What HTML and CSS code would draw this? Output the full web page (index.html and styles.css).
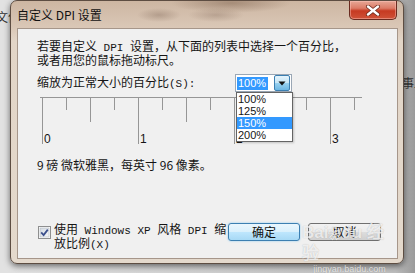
FILE: index.html
```html
<!DOCTYPE html>
<html lang="zh-CN">
<head>
    <meta charset="UTF-8">
    <title>自定义 DPI 设置</title>
    <link rel="stylesheet" href="styles.css">
</head>
<body>
    <span class="behind behind-left">文件</span>
    <span class="behind behind-right">事上</span>

    <div class="window">
        <div class="titlebar">
            <span class="title">自定义 DPI 设置</span>
            <button class="close" aria-label="关闭">
                <svg width="16" height="11" viewBox="0 0 16 11">
                    <path d="M3 1.5 L13 9.5 M13 1.5 L3 9.5" stroke="#6b2a1c" stroke-width="4" stroke-linecap="round"/>
                    <path d="M3 1.5 L13 9.5 M13 1.5 L3 9.5" stroke="#fff" stroke-width="2.4" stroke-linecap="round"/>
                </svg>
            </button>
        </div>

        <div class="panel">
            <p class="intro">若要自定义<span class="en"> DPI </span>设置，从下面的列表中选择一个百分比，<br>或者用您的鼠标拖动标尺。</p>

            <div class="scale-row">
                <span class="scale-label">缩放为正常大小的百分比<span class="en">(S):</span></span>
                <div class="combo">
                    <span class="combo-value">100%</span>
                    <span class="combo-btn">
                        <svg width="14" height="14" viewBox="0 0 14 14"><polygon points="3.5,5.5 10.5,5.5 7,9.5" fill="#111"/></svg>
                    </span>
                </div>
            </div>

            <svg class="ruler" width="325" height="50" viewBox="0 0 325 50">
                <g stroke="#969696" stroke-width="1">
                    <line x1="0" y1="0.5" x2="322" y2="0.5"/>
                    <line x1="2.5" y1="0" x2="2.5" y2="47"/>
                    <line x1="26.5" y1="0" x2="26.5" y2="13"/>
                    <line x1="50.5" y1="0" x2="50.5" y2="25"/>
                    <line x1="74.5" y1="0" x2="74.5" y2="13"/>
                    <line x1="98.5" y1="0" x2="98.5" y2="47"/>
                    <line x1="122.5" y1="0" x2="122.5" y2="13"/>
                    <line x1="146.5" y1="0" x2="146.5" y2="25"/>
                    <line x1="170.5" y1="0" x2="170.5" y2="13"/>
                    <line x1="194.5" y1="0" x2="194.5" y2="47"/>
                    <line x1="218.5" y1="0" x2="218.5" y2="13"/>
                    <line x1="242.5" y1="0" x2="242.5" y2="25"/>
                    <line x1="266.5" y1="0" x2="266.5" y2="13"/>
                    <line x1="290.5" y1="0" x2="290.5" y2="47"/>
                    <line x1="314.5" y1="0" x2="314.5" y2="13"/>
                </g>
                <g class="ruler-num">
                    <text x="4" y="46">0</text>
                    <text x="100" y="46">1</text>
                    <text x="196" y="46">2</text>
                    <text x="292" y="46">3</text>
                </g>
            </svg>

            <p class="info">9 磅 微软雅黑，每英寸 96 像素。</p>

            <div class="footer">
                <label class="check">
                    <svg class="box" width="13" height="13" viewBox="0 0 13 13">
                        <defs>
                            <linearGradient id="boxfill" x1="0" y1="0" x2="1" y2="1">
                                <stop offset="0" stop-color="#d4dbe3"/>
                                <stop offset="1" stop-color="#f6f7f9"/>
                            </linearGradient>
                        </defs>
                        <rect x="0.5" y="0.5" width="12" height="12" fill="#fff" stroke="#8e8f8f"/>
                        <rect x="2" y="2" width="9" height="9" fill="url(#boxfill)" stroke="#b3b8bf" stroke-width="0.6"/>
                        <path d="M3.2 6.4 L5.6 9 L9.8 3.6" fill="none" stroke="#3b4f8c" stroke-width="1.8"/>
                    </svg>
                    <span class="check-text">使用<span class="en"> Windows XP </span>风格<span class="en"> DPI </span>缩<br>放比例<span class="en">(X)</span></span>
                </label>
                <button class="btn btn-ok">确定</button>
                <button class="btn">取消</button>
            </div>

            <ul class="dropdown">
                <li>100%</li>
                <li>125%</li>
                <li class="selected">150%</li>
                <li>200%</li>
            </ul>

            <div class="watermark">
                <span class="wm-logo">Bai<span class="paw">❀</span>du 经验</span>
                <span class="wm-url">jingyan.baidu.com</span>
            </div>
        </div>
    </div>
</body>
</html>
```

FILE: styles.css
```css
body {
    margin: 0;
    width: 415px;
    height: 273px;
    overflow: hidden;
    position: relative;
    font-family: "Noto Sans CJK SC", sans-serif;
    font-size: 12px;
    color: #151515;
    background: linear-gradient(90deg, #e2e2e2 0, #e2e2e2 12px, #bdbdbd 395px, #9a9a9a 100%);
}

.behind {
    position: absolute;
    font-size: 12px;
    color: #333;
    white-space: nowrap;
}

.behind-left {
    left: -4px;
    top: 8px;
}

.behind-right {
    left: 402px;
    top: 74px;
}

.window {
    position: relative;
    margin-left: 10px;
    width: 394px;
    height: 264px;
    box-sizing: border-box;
    border: 1px solid #5d4d42;
    border-radius: 7px;
    padding: 0 5px 4px 6px;
    display: flex;
    flex-direction: column;
    background:
        radial-gradient(ellipse 22px 7px at 148px 14px, rgba(120, 95, 80, 0.35), transparent),
        radial-gradient(ellipse 28px 7px at 205px 14px, rgba(120, 95, 80, 0.3), transparent),
        radial-gradient(ellipse 60px 10px at 220px 2px, rgba(90, 60, 40, 0.35), transparent),
        linear-gradient(to bottom, #cdb6a2 0, #dac7b6 26px, #e2d5c7 40px, #e4d9cc 100%);
    box-shadow: 0 2px 6px rgba(0, 0, 0, 0.55);
}

.titlebar {
    height: 27px;
    display: flex;
    justify-content: space-between;
    align-items: flex-start;
}

.title {
    margin-top: 6px;
    line-height: 16px;
    font-size: 12px;
    color: #111;
}

.close {
    width: 48px;
    height: 19px;
    margin-right: 1px;
    padding: 0;
    border: 1px solid #6a2b20;
    border-top: none;
    border-radius: 0 0 5px 5px;
    display: flex;
    align-items: center;
    justify-content: center;
    background: linear-gradient(to bottom, #e7a796 0, #dc7b66 40%, #c63a22 55%, #cf5238 100%);
    box-shadow: inset 0 0 0 1px rgba(255, 200, 190, 0.45);
}

.panel {
    position: relative;
    flex: 1;
    background: #f0f0f0;
    border: 1px solid #a6968a;
    padding: 11px 0 7px 19px;
    display: flex;
    flex-direction: column;
}

.en {
    font-family: "Liberation Mono", monospace;
    font-size: 11px;
}

.intro {
    margin: 0;
    line-height: 12px;
}

.scale-row {
    margin-top: 8px;
    height: 18px;
    display: flex;
    align-items: center;
}

.scale-label {
    width: 198px;
    line-height: 12px;
}

.combo {
    width: 57px;
    height: 18px;
    box-sizing: border-box;
    border: 1px solid #9aa7b5;
    background: #fff;
    display: flex;
    align-items: center;
    justify-content: space-between;
    padding: 1px;
}

.combo-value {
    background: #3399ff;
    color: #fff;
    font-family: "Liberation Sans", sans-serif;
    font-size: 11px;
    line-height: 13px;
    padding: 0 2px 0 1px;
}

.combo-btn {
    width: 16px;
    height: 16px;
    box-sizing: border-box;
    border: 1px solid #3c7fb1;
    border-radius: 2px;
    background: linear-gradient(to bottom, #e5f4fc 0, #c4e5f6 50%, #98d1ef 51%, #6cb7e4 100%);
    display: flex;
    align-items: center;
    justify-content: center;
}

.ruler {
    display: block;
    margin-top: 5px;
    margin-left: 3px;
}

.ruler-num {
    font-family: "Liberation Sans", sans-serif;
    font-size: 12px;
    fill: #151515;
}

.info {
    margin: 12px 0 0;
    line-height: 12px;
}

.footer {
    margin-top: auto;
    display: flex;
    align-items: flex-start;
}

.check {
    width: 190px;
    margin-left: 1px;
    display: flex;
    gap: 3px;
}

.box {
    margin-top: 3px;
    flex-shrink: 0;
}

.check-text {
    line-height: 12px;
}

.btn {
    width: 73px;
    height: 18px;
    margin-right: 8px;
    padding: 0;
    font-family: "Noto Sans CJK SC", sans-serif;
    font-size: 12px;
    line-height: 14px;
    color: #111;
    border: 1px solid #707070;
    border-radius: 3px;
    background: linear-gradient(to bottom, #f2f2f2 0, #ebebeb 50%, #dddddd 51%, #cfcfcf 100%);
}

.btn-ok {
    width: 72px;
    border-color: #3c7fb1;
    background: linear-gradient(to bottom, #eaf6fd 0, #d9f0fc 50%, #bee6fd 51%, #a7d9f5 100%);
    box-shadow: 0 0 2px #7ec4f0;
}

.dropdown {
    position: absolute;
    left: 218px;
    top: 63px;
    width: 57px;
    margin: 0;
    padding: 0;
    list-style: none;
    box-sizing: border-box;
    border: 1px solid #646464;
    background: #fff;
    font-family: "Liberation Sans", sans-serif;
    font-size: 11px;
    box-shadow: 1px 1px 2px rgba(0, 0, 0, 0.2);
}

.dropdown li {
    height: 12px;
    line-height: 12px;
    padding-left: 1px;
}

.dropdown .selected {
    background: #3399ff;
    color: #fff;
}

.watermark {
    position: absolute;
    left: 284px;
    top: 194px;
    display: flex;
    flex-direction: column;
    align-items: center;
    color: rgba(255, 255, 255, 0.75);
    text-shadow: 0 0 1px rgba(0, 0, 0, 0.25);
    pointer-events: none;
}

.wm-logo {
    font-family: "Liberation Sans", sans-serif;
    font-size: 17px;
    font-weight: bold;
    line-height: 20px;
}

.paw {
    font-size: 13px;
}

.wm-url {
    font-family: "Liberation Sans", sans-serif;
    font-size: 9px;
    line-height: 10px;
}
```
